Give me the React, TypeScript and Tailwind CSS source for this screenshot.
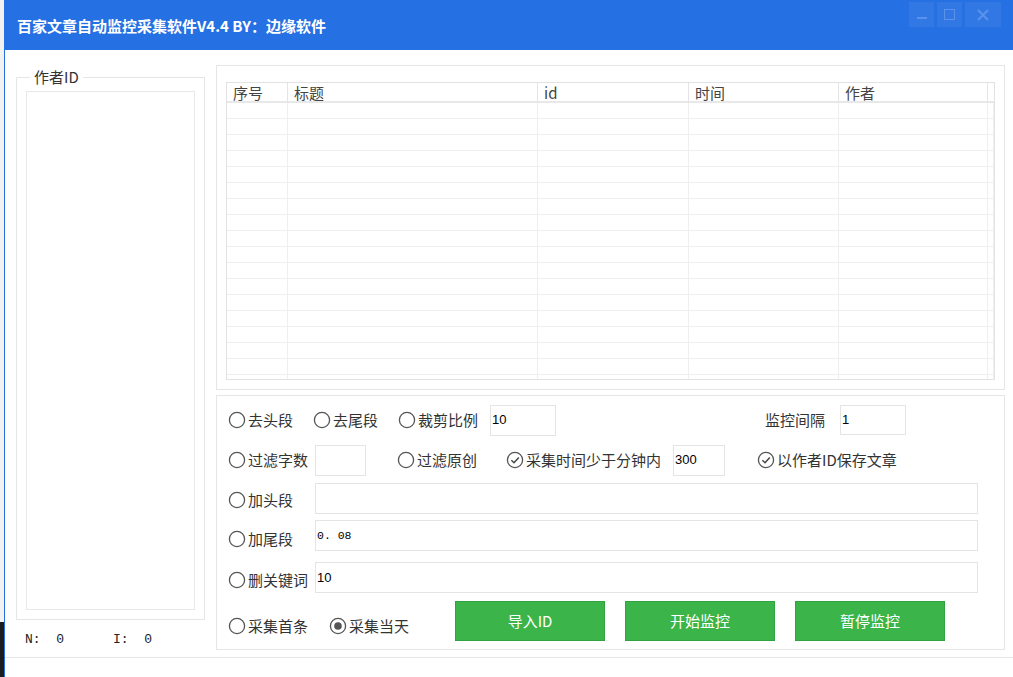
import React from "react";

type RadioState = "off" | "check" | "dot";

function RadioMark({ state }: { state: RadioState }) {
  return (
    <svg width="18" height="18" viewBox="0 0 18 18" className="shrink-0">
      <circle cx="9" cy="9" r="7.6" fill="white" stroke="#555" strokeWidth="1.3" />
      {state === "check" ? (
        <path d="M5.4 9.2 L8 11.7 L12.8 6.4" fill="none" stroke="#444" strokeWidth="1.5" />
      ) : null}
      {state === "dot" ? <circle cx="9" cy="9" r="3.8" fill="#555" /> : null}
    </svg>
  );
}

function Radio({ label, state = "off", className = "" }: { label: string; state?: RadioState; className?: string }) {
  return (
    <div className={`flex items-center ${className}`}>
      <RadioMark state={state} />
      <span className="ml-[2px] text-[15px] leading-[20px] text-[#333] whitespace-nowrap">{label}</span>
    </div>
  );
}

function Field({ value = "", className = "", mono = false }: { value?: string; className?: string; mono?: boolean }) {
  return (
    <div className={`flex items-center border border-[#e4e4e4] bg-white pl-[1px] ${className}`}>
      <span
        className={
          mono
            ? "font-['Liberation_Mono',monospace] text-[11.5px] text-black"
            : "font-['Liberation_Sans',Arial,sans-serif] text-[13px] text-black"
        }
      >
        {value}
      </span>
    </div>
  );
}

const columns = "grid-cols-[61px_250px_151px_150px_149px_1fr]";
const headers = ["序号", "标题", "id", "时间", "作者", ""];

export default function App() {
  const rows = Array.from({ length: 18 }, (_, i) => i);

  return (
    <div className="flex h-[677px] w-[1013px] overflow-hidden bg-white font-['Noto_Sans_CJK_SC','Noto_Sans',sans-serif]">
      <div className="flex w-[4px] flex-col">
        <div className="h-[622px] bg-[#f2f2f2]" />
        <div className="flex-1 bg-[#1c1c1c]" />
      </div>

      <div className="flex flex-1 flex-col border-l border-[#2570e3]">
        {/* title bar */}
        <div className="flex h-[50px] items-start bg-[#2570e3]">
          <div className="mt-[16px] ml-[12px] text-[15px] font-bold leading-[20px] text-white">
            百家文章自动监控采集软件V4.4 BY：边缘软件
          </div>
          <div className="mt-[2px] mr-[12px] ml-auto flex gap-[3px]">
            <div className="flex h-[25px] w-[25px] items-center justify-center bg-white/[0.06]">
              <div className="mt-[6px] h-[2px] w-[10px] bg-[#5b93ec]" />
            </div>
            <div className="flex h-[25px] w-[25px] items-center justify-center bg-white/[0.06]">
              <div className="h-[11px] w-[11px] border-[1.5px] border-[#5b93ec]" />
            </div>
            <div className="flex h-[25px] w-[36px] items-center justify-center bg-white/[0.06]">
              <svg width="12" height="12" viewBox="0 0 12 12">
                <path d="M1 1 L11 11 M11 1 L1 11" stroke="#5b93ec" strokeWidth="2" />
              </svg>
            </div>
          </div>
        </div>

        {/* body */}
        <div className="flex h-[607px] pl-[11px]">
          {/* left column */}
          <div className="flex w-[189px] flex-col">
            <div className="relative mt-[27px] flex h-[543px] flex-col border border-[#e6e6e6]">
              <span className="absolute -top-[11px] left-[13px] bg-white px-[4px] text-[15px] leading-[20px] text-[#333]">
                作者ID
              </span>
              <div className="mx-[9px] mt-[13px] mb-[9px] flex-1 border border-[#e8e8e8]" />
            </div>
            <div className="mt-[10px] flex font-['Liberation_Mono',monospace] text-[13px] leading-[20px] text-[#222]">
              <span className="ml-[9px] whitespace-pre">N:  0</span>
              <span className="ml-[49px] whitespace-pre">I:  0</span>
            </div>
          </div>

          {/* right column */}
          <div className="ml-[11px] flex w-[789px] flex-col">
            <div className="mt-[15px] h-[325px] border border-[#e6e6e6] px-[9px] pt-[16px] pb-[9px]">
              <div className="flex h-full flex-col overflow-hidden border border-[#e2e2e2]">
                <div className={`grid h-[20px] shrink-0 ${columns} border-b-2 border-[#e8e8e8]`}>
                  {headers.map((h, i) => (
                    <div key={i} className="border-r border-[#e4e4e4] pl-[6px] text-[15px] leading-[19px] text-[#444]">
                      {h}
                    </div>
                  ))}
                </div>
                {rows.map((r) => (
                  <div key={r} className={`grid h-[16px] shrink-0 ${columns} border-b border-[#efefef]`}>
                    {headers.map((_, i) => (
                      <div key={i} className="border-r border-[#efefef]" />
                    ))}
                  </div>
                ))}
              </div>
            </div>

            <div className="mt-[5px] flex h-[255px] flex-col border border-[#e6e6e6] pt-[8px] pl-[11px]">
              {/* row 1 */}
              <div className="flex h-[32px] items-center">
                <Radio label="去头段" />
                <Radio label="去尾段" className="ml-[20px]" />
                <Radio label="裁剪比例" className="ml-[20px]" />
                <Field value="10" className="ml-[12px] h-[31px] w-[66px]" />
                <span className="ml-[209px] text-[15px] leading-[20px] text-[#333]">监控间隔</span>
                <Field value="1" className="ml-[15px] h-[30px] w-[66px]" />
              </div>

              {/* row 2 */}
              <div className="mt-[8px] flex h-[32px] items-center">
                <Radio label="过滤字数" />
                <Field className="ml-[7px] h-[31px] w-[51px]" />
                <Radio label="过滤原创" className="ml-[31px]" />
                <Radio label="采集时间少于分钟内" state="check" className="ml-[29px]" />
                <Field value="300" className="ml-[12px] h-[31px] w-[52px]" />
                <Radio label="以作者ID保存文章" state="check" className="ml-[32px]" />
              </div>

              {/* rows 3-5 */}
              <div className="mt-[7px] flex h-[31px] items-center">
                <div className="w-[87px]">
                  <Radio label="加头段" className="mt-[2px]" />
                </div>
                <Field className="h-[31px] w-[663px]" />
              </div>
              <div className="mt-[6px] flex h-[31px] items-center">
                <div className="w-[87px]">
                  <Radio label="加尾段" className="mt-[6px]" />
                </div>
                <Field value="0. 08" mono className="h-[31px] w-[663px]" />
              </div>
              <div className="mt-[11px] flex h-[31px] items-center">
                <div className="w-[87px]">
                  <Radio label="删关键词" className="mt-[5px]" />
                </div>
                <Field value="10" className="h-[31px] w-[663px]" />
              </div>

              {/* row 6 */}
              <div className="mt-[8px] flex h-[40px] items-center">
                <Radio label="采集首条" className="mt-[10px]" />
                <Radio label="采集当天" state="dot" className="mt-[10px] ml-[21px]" />
                <div className="ml-[46px] flex gap-[20px]">
                  {["导入ID", "开始监控", "暂停监控"].map((t) => (
                    <button
                      key={t}
                      type="button"
                      className="flex h-[40px] w-[150px] items-center justify-center border border-[#2fa33f] bg-[#3bb54a] text-[15px] text-white"
                    >
                      {t}
                    </button>
                  ))}
                </div>
              </div>
            </div>
          </div>
        </div>

        <div className="border-t border-[#e6e6e6]" />
      </div>
    </div>
  );
}
